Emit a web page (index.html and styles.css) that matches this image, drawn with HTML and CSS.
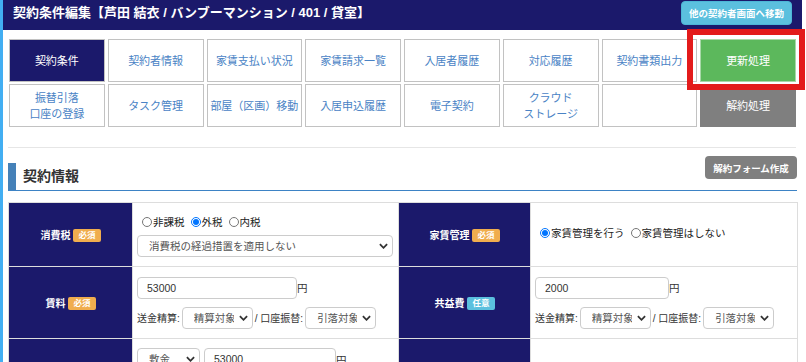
FILE: index.html
```html
<!DOCTYPE html>
<html lang="ja">
<head>
    <meta charset="UTF-8">
    <title>契約条件編集</title>
    <link rel="stylesheet" href="styles.css">
</head>
<body>
    <div class="page">
        <header class="topbar">
            <h1>契約条件編集【芦田 結衣 / バンブーマンション / 401 / 貸室】</h1>
            <button class="btn-jump">他の契約者画面へ移動</button>
        </header>

        <nav class="tabs">
            <a class="tab active">契約条件</a>
            <a class="tab">契約者情報</a>
            <a class="tab">家賃支払い状況</a>
            <a class="tab">家賃請求一覧</a>
            <a class="tab">入居者履歴</a>
            <a class="tab">対応履歴</a>
            <a class="tab">契約書類出力</a>
            <a class="tab renew">更新処理</a>
            <a class="tab">振替引落<br>口座の登録</a>
            <a class="tab">タスク管理</a>
            <a class="tab">部屋（区画）移動</a>
            <a class="tab">入居申込履歴</a>
            <a class="tab">電子契約</a>
            <a class="tab">クラウド<br>ストレージ</a>
            <a class="tab"></a>
            <a class="tab cancel">解約処理</a>
        </nav>

        <hr class="divider">

        <div class="section-head">
            <h2>契約情報</h2>
            <button class="btn-gray">解約フォーム作成</button>
        </div>

        <table class="info">
            <colgroup>
                <col class="c-th1">
                <col class="c-td2">
                <col class="c-th3">
                <col class="c-td4">
            </colgroup>
            <tr class="row-tax">
                <th>消費税<span class="badge req">必須</span></th>
                <td>
                    <div class="radios">
                        <label><input type="radio" name="tax">非課税</label>
                        <label><input type="radio" name="tax" checked>外税</label>
                        <label><input type="radio" name="tax">内税</label>
                    </div>
                    <div class="sel wide">
                        <select><option>消費税の経過措置を適用しない</option></select>
                        <svg viewBox="0 0 10 6"><path d="M1 1l4 4 4-4" /></svg>
                    </div>
                </td>
                <th>家賃管理<span class="badge req">必須</span></th>
                <td>
                    <div class="radios">
                        <label><input type="radio" name="mng" checked>家賃管理を行う</label>
                        <label><input type="radio" name="mng">家賃管理はしない</label>
                    </div>
                </td>
            </tr>
            <tr class="row-money">
                <th>賃料<span class="badge req">必須</span></th>
                <td>
                    <div class="amount"><input class="txt rent" type="text" value="53000">円</div>
                    <div class="opts">
                        送金精算:
                        <div class="sel short">
                            <select><option>精算対象</option></select>
                            <svg viewBox="0 0 10 6"><path d="M1 1l4 4 4-4" /></svg>
                        </div>
                        / 口座振替:
                        <div class="sel short">
                            <select><option>引落対象</option></select>
                            <svg viewBox="0 0 10 6"><path d="M1 1l4 4 4-4" /></svg>
                        </div>
                    </div>
                </td>
                <th>共益費<span class="badge opt">任意</span></th>
                <td>
                    <div class="amount"><input class="txt fee" type="text" value="2000">円</div>
                    <div class="opts">
                        送金精算:
                        <div class="sel short">
                            <select><option>精算対象</option></select>
                            <svg viewBox="0 0 10 6"><path d="M1 1l4 4 4-4" /></svg>
                        </div>
                        / 口座振替:
                        <div class="sel short">
                            <select><option>引落対象</option></select>
                            <svg viewBox="0 0 10 6"><path d="M1 1l4 4 4-4" /></svg>
                        </div>
                    </div>
                </td>
            </tr>
            <tr class="row-deposit">
                <th>敷金・保証金<span class="badge opt">任意</span></th>
                <td>
                    <div class="amount">
                        <div class="sel kind">
                            <select><option>敷金</option></select>
                            <svg viewBox="0 0 10 6"><path d="M1 1l4 4 4-4" /></svg>
                        </div>
                        <input class="txt deposit" type="text" value="53000">円
                    </div>
                </td>
                <th></th>
                <td></td>
            </tr>
        </table>
    </div>

    <div class="highlight"></div>
</body>
</html>
```

FILE: styles.css
```css
* {
    box-sizing: border-box;
}

body {
    margin: 0;
    font-family: "Liberation Sans", "Noto Sans CJK JP", sans-serif;
    background-color: #FFFFFF;
    color: #333333;
    border-left: 3px solid #42AEF2;
    min-height: 100vh;
}

.page {
    width: 799px;
}

.topbar {
    display: flex;
    justify-content: space-between;
    align-items: center;
    height: 30px;
    padding: 1px 10px 5px 10px;
    background-color: #1B196B;
}

.topbar h1 {
    margin: 0;
    font-size: 13px;
    font-weight: bold;
    line-height: 24px;
    color: #FFFFFF;
}

.btn-jump {
    width: 111px;
    height: 24px;
    padding: 0;
    font-family: inherit;
    font-size: 9.5px;
    font-weight: bold;
    color: #FFFFFF;
    background-color: #5BC0DE;
    border: 1px solid #4DB6D6;
    border-radius: 4px;
}

.tabs {
    display: grid;
    grid-template-columns: repeat(8, 1fr);
    grid-auto-rows: 43px;
    gap: 2px 3px;
    margin: 9px 6px 0 6px;
}

.tab {
    display: flex;
    align-items: center;
    justify-content: center;
    text-align: center;
    font-size: 11px;
    line-height: 16px;
    color: #4A83C5;
    border: 1px solid #C2C2C2;
    background-color: #FFFFFF;
}

.tab.active {
    background-color: #1B196B;
    color: #FFFFFF;
}

.tab.renew {
    background-color: #5CB85C;
    border-color: #A9D8A9;
    color: #FFFFFF;
}

.tab.cancel {
    background-color: #7F7F7F;
    border-color: #7F7F7F;
    color: #FFFFFF;
}

.divider {
    margin: 20px 6px 0 5px;
    border: 0;
    border-top: 1px solid #E6E6E6;
}

.section-head {
    display: flex;
    justify-content: space-between;
    height: 35px;
    margin: 8px 5px 0 5px;
    border-bottom: 1px solid #3D83C5;
}

.section-head h2 {
    align-self: flex-end;
    margin: 0;
    height: 27px;
    padding-left: 7px;
    border-left: 8px solid #4581B8;
    font-size: 14px;
    font-weight: bold;
    line-height: 27px;
    color: #333333;
}

.btn-gray {
    width: 92px;
    height: 23px;
    padding: 0;
    font-family: inherit;
    font-size: 9.5px;
    font-weight: bold;
    color: #FFFFFF;
    background-color: #7F7F7F;
    border: 0;
    border-radius: 4px;
}

.info {
    width: 789px;
    margin: 11px 5px 0 5px;
    border-collapse: collapse;
    table-layout: fixed;
    font-size: 10.5px;
}

.c-th1 { width: 124px; }
.c-td2 { width: 266px; }
.c-th3 { width: 132px; }
.c-td4 { width: 267px; }

.info th,
.info td {
    border: 1px solid #DDDDDD;
}

.info th {
    background-color: #1B196B;
    color: #FFFFFF;
    font-size: 10px;
    font-weight: bold;
    text-align: center;
}

.info td {
    padding: 0 4px;
    vertical-align: middle;
}

.row-tax { height: 64px; }
.row-money { height: 72px; }
.row-deposit { height: 80px; }

.row-deposit td {
    vertical-align: top;
    padding-top: 9px;
}

.badge {
    display: inline-block;
    margin-left: 3px;
    padding: 0 5px;
    height: 13px;
    font-size: 8.5px;
    line-height: 13px;
    border-radius: 2px;
    color: #FFFFFF;
    vertical-align: 1px;
}

.badge.req { background-color: #F0AD4E; }
.badge.opt { background-color: #5BC0DE; }

.radios {
    display: flex;
    gap: 6px;
    padding-left: 5px;
    height: 18px;
    align-items: center;
    color: #222222;
}

.radios label {
    display: flex;
    align-items: center;
}

.radios input {
    width: 10px;
    height: 10px;
    margin: 0 1px 0 0;
}

.row-tax .radios {
    margin-bottom: 4px;
}

.sel {
    position: relative;
    display: inline-block;
    vertical-align: middle;
}

.sel select {
    appearance: none;
    width: 100%;
    height: 22px;
    padding: 0 18px 0 11px;
    font-family: inherit;
    font-size: 10.5px;
    color: #555555;
    background-color: #FFFFFF;
    border: 1px solid #CCCCCC;
    border-radius: 4px;
}

.sel svg {
    position: absolute;
    right: 5px;
    top: 8px;
    width: 9px;
    height: 6px;
    fill: none;
    stroke: #333333;
    stroke-width: 2;
}

.sel.wide { width: 256px; display: block; }
.sel.short { width: 71px; }
.sel.kind { width: 63px; margin-right: 4px; }

.amount {
    display: flex;
    align-items: center;
    height: 22px;
}

.txt {
    height: 22px;
    padding: 0 9px;
    font-family: inherit;
    font-size: 10.5px;
    color: #333333;
    border: 1px solid #CCCCCC;
    border-radius: 4px;
}

.txt.rent { width: 160px; }
.txt.fee { width: 134px; }
.txt.deposit { width: 132px; }

.opts {
    display: flex;
    align-items: center;
    gap: 2px;
    margin-top: 8px;
    height: 22px;
    font-size: 10px;
    color: #333333;
}

.highlight {
    position: absolute;
    left: 687px;
    top: 29px;
    width: 118px;
    height: 61px;
    border: 6px solid #E31B1B;
}
```
